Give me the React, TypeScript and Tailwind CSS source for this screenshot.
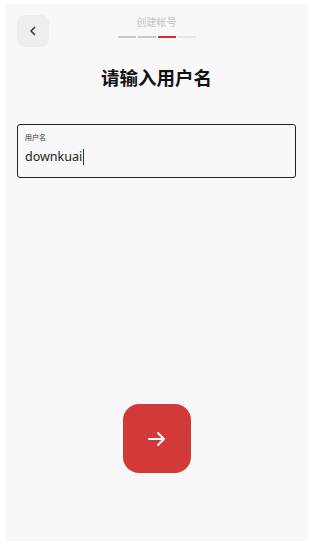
import React from 'react';

const App: React.FC = () => {
  const steps = ['bg-[#c8c8c8]', 'bg-[#c8c8c8]', 'bg-[#d32f2f]', 'bg-[#e6e6e6]'];

  return (
    <div className="w-[309px] h-[544px] bg-white pt-[4px] pl-[5px]" style={{ fontFamily: '"Noto Sans", "Noto Sans CJK SC", sans-serif' }}>
      <div className="relative w-[303px] h-[537px] bg-[#f8f8f8] flex flex-col">
        {/* Header */}
        <div className="relative h-[44px] mt-[11px]">
          <button className="absolute left-[12px] top-0 w-[32px] h-[32px] rounded-[8px] bg-[#eeeeee] flex items-center justify-center">
            <svg width="12" height="12" viewBox="0 0 24 24" fill="none" stroke="#333" strokeWidth="3" strokeLinecap="round" strokeLinejoin="round">
              <path d="M15 5l-7 7 7 7" />
            </svg>
          </button>
          <div className="flex flex-col items-center">
            <p className="text-[10px] leading-[12px] text-[#c4c4c4] mt-[1px]">创建帐号</p>
            <div className="flex gap-[2px] mt-[8px]">
              {steps.map((c, i) => (
                <div key={i} className={`w-[18px] h-[2px] ${c}`}></div>
              ))}
            </div>
          </div>
        </div>

        <h1 className="text-center text-[18.5px] leading-[24px] font-bold text-[#111] mt-[7px]">请输入用户名</h1>

        {/* Input */}
        <div className="mx-[12px] mt-[34px] h-[54px] border-[1.5px] border-[#222] rounded-[3px] px-[7px] pt-[8px]">
          <p className="text-[7px] leading-[10px] text-[#333]">用户名</p>
          <div className="flex items-center mt-[5px]">
            <span className="text-[12.5px] leading-[18px] text-[#222]">downkuai</span>
            <span className="w-px h-[16px] bg-[#333] ml-[1px]"></span>
          </div>
        </div>

        <div className="flex-1"></div>

        {/* Next button */}
        <div className="flex justify-center mb-[68px]">
          <button className="w-[68px] h-[69px] rounded-[16px] bg-[#d23a3a] flex items-center justify-center">
            <svg width="24" height="24" viewBox="0 0 24 24" fill="none" stroke="white" strokeWidth="1.8" strokeLinecap="round" strokeLinejoin="round">
              <path d="M4 12h15M13 6l6 6-6 6" />
            </svg>
          </button>
        </div>
      </div>
    </div>
  );
};

export default App;
